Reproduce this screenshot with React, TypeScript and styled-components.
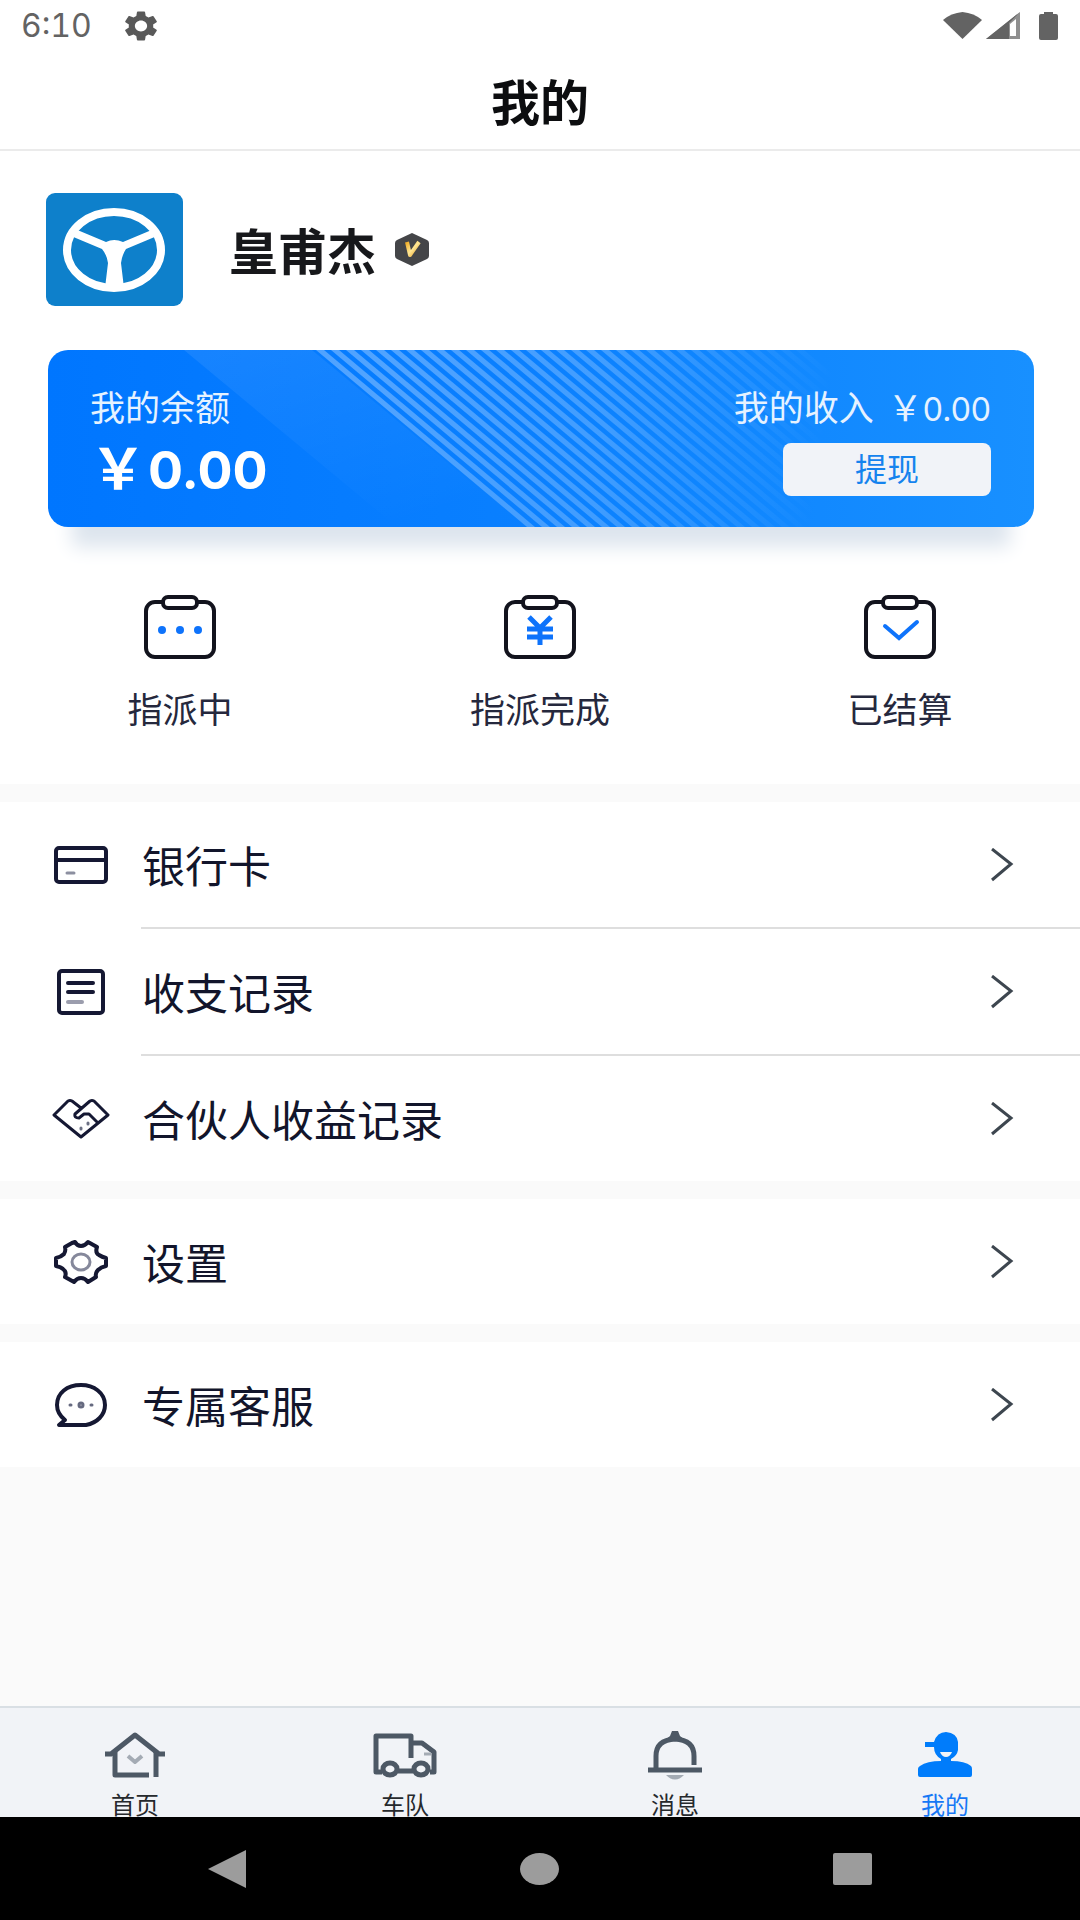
import React from "react";
import styled, { createGlobalStyle } from "styled-components";

const GlobalStyle = createGlobalStyle`
  *, *::before, *::after { box-sizing: border-box; }
  body {
    margin: 0;
    background: #fafafa;
    color: #12152b;
    font-family: Inter, "Noto Sans CJK SC", sans-serif;
  }
  button { font-family: inherit; border: 0; background: none; padding: 0; cursor: pointer; }
  a { color: inherit; text-decoration: none; }
  svg { display: block; flex: none; }
`;

const Page = styled.div`
  min-height: 100vh;
  display: flex;
  flex-direction: column;
`;

const StatusBar = styled.div`
  display: flex;
  align-items: center;
  justify-content: space-between;
  height: 52px;
  padding: 0 22px 0 21px;
  background: #fff;
  color: #636363;
`;

const StatusGroup = styled.div<{ $gap: number }>`
  display: flex;
  align-items: center;
  gap: ${(p) => p.$gap}px;
`;

const Clock = styled.time`
  font-size: 32px;
  line-height: 40px;
  font-variant-numeric: tabular-nums;
`;

const SignalGroup = styled.div`
  display: flex;
  gap: 4px;
`;

const Header = styled.header`
  display: flex;
  align-items: center;
  justify-content: center;
  height: 99px;
  padding-top: 6px;
  background: #fff;
  border-bottom: 2px solid #ebebeb;
`;

const Title = styled.h1`
  margin: 0;
  font-size: 49px;
  line-height: 60px;
  font-weight: 700;
  color: #0c0d0f;
`;

const Main = styled.main`
  flex: 1;
  display: flex;
  flex-direction: column;
  gap: 18px;
`;

const Overview = styled.section`
  background: #fff;
  padding: 42px 46px 53px;
`;

const Profile = styled.div`
  display: flex;
  align-items: center;
  height: 113px;
`;

const Avatar = styled.div`
  width: 137px;
  height: 113px;
  border-radius: 9px;
  overflow: hidden;
  background: #0e80cb;
`;

const UserName = styled.h2`
  margin: 0 18px 0 46px;
  padding-top: 6px;
  font-size: 49px;
  line-height: 60px;
  font-weight: 700;
  color: #17181b;
`;

const BalanceCard = styled.div`
  position: relative;
  display: flex;
  justify-content: space-between;
  margin: 44px 0 0 2px;
  padding: 38px 43px 30px 42px;
  height: 177px;
  border-radius: 20px;
  background: linear-gradient(90deg, #0076ff, #0a80ff 50%, #1890ff);
  box-shadow: 0 44px 18px -24px #dde5ee;
  color: #fff;
`;

const CardPattern = styled.svg`
  position: absolute;
  inset: 0;
  width: 100%;
  height: 100%;
  border-radius: 20px;
`;

const CardColumn = styled.div<{ $end?: boolean }>`
  position: relative;
  display: flex;
  flex-direction: column;
  align-items: ${(p) => (p.$end ? "flex-end" : "flex-start")};
`;

const CardLabel = styled.div`
  display: flex;
  align-items: baseline;
  font-size: 35px;
  line-height: 40px;
  color: #e6f2ff;
`;

const IncomeValue = styled.span`
  margin-left: 14px;
`;

const IncomeDigits = styled.span`
  font-size: 32px;
`;

const Balance = styled.div`
  display: flex;
  align-items: baseline;
  margin-top: 11px;
  font-size: 52px;
  line-height: 60px;
  font-weight: 700;
`;

const Currency = styled.span`
  padding-right: 2px;
  font-size: 56px;
`;

const WithdrawButton = styled.button`
  width: 208px;
  height: 53px;
  margin-top: 13px;
  border-radius: 8px;
  background: #f1f3f8;
  color: #1583ee;
  font-size: 32px;
  line-height: 50px;
`;

const Stats = styled.nav`
  display: grid;
  grid-template-columns: repeat(3, 1fr);
  margin: 68px -46px 0;
`;

const StatLink = styled.a`
  display: flex;
  flex-direction: column;
  align-items: center;
  gap: 30px;
  font-size: 35px;
  line-height: 42px;
  color: #25283d;
`;

const MenuGroup = styled.ul`
  list-style: none;
  margin: 0;
  padding: 0;
  background: #fff;
`;

const MenuItem = styled.li`
  &:not(:last-child)::after {
    content: "";
    display: block;
    height: 2px;
    margin-left: 141px;
    background: #dedede;
  }
`;

const MenuLink = styled.a`
  display: flex;
  align-items: center;
  height: 125px;
  padding: 0 66px 0 50px;
  font-size: 43px;
  line-height: 56px;
`;

const MenuText = styled.span`
  flex: 1;
  margin-left: 32px;
  padding-top: 4px;
`;

const TabBar = styled.nav`
  display: grid;
  grid-template-columns: repeat(4, 1fr);
  height: 111px;
  padding-top: 22px;
  border-top: 2px solid #d9dfe4;
  background: #f1f3f7;
`;

const TabLink = styled.a<{ $active?: boolean }>`
  display: flex;
  flex-direction: column;
  align-items: center;
  gap: 15px;
  font-size: 24px;
  line-height: 22px;
  color: ${(p) => (p.$active ? "#1677f5" : "#26292d")};
`;

const SystemBar = styled.div`
  display: flex;
  align-items: center;
  justify-content: space-between;
  height: 103px;
  padding: 0 208px;
  background: #000;
`;

const SystemButton = styled.button`
  display: block;
`;

const GearSolid = () => (
  <svg width="34" height="30" viewBox="2 2 20 20" preserveAspectRatio="none" fill="#595959" aria-hidden="true">
    <path d="M19.14 12.94c.04-.3.06-.61.06-.94 0-.32-.02-.64-.07-.94l2.03-1.58a.49.49 0 0 0 .12-.61l-1.92-3.32a.488.488 0 0 0-.59-.22l-2.39.96c-.5-.38-1.03-.7-1.62-.94l-.36-2.54a.484.484 0 0 0-.48-.41h-3.84c-.24 0-.43.17-.47.41l-.36 2.54c-.59.24-1.13.57-1.62.94l-2.39-.96c-.22-.08-.47 0-.59.22L2.74 8.87c-.12.21-.08.47.12.61l2.03 1.58c-.05.3-.09.63-.09.94s.02.64.07.94l-2.03 1.58a.49.49 0 0 0-.12.61l1.92 3.32c.12.22.37.29.59.22l2.39-.96c.5.38 1.03.7 1.62.94l.36 2.54c.05.24.24.41.48.41h3.84c.24 0 .44-.17.47-.41l.36-2.54c.59-.24 1.13-.56 1.62-.94l2.39.96c.22.08.47 0 .59-.22l1.92-3.32c.12-.22.07-.47-.12-.61l-2.01-1.58zM12 15.6c-1.98 0-3.6-1.62-3.6-3.6s1.62-3.6 3.6-3.6 3.6 1.62 3.6 3.6-1.62 3.6-3.6 3.6z" />
  </svg>
);

const WifiIcon = () => (
  <svg width="39" height="28" viewBox="0 0 39 28" fill="#636363" aria-hidden="true">
    <path d="M0 8Q8 1 19.500 0Q31 1 39 8L19.500 27Z" />
  </svg>
);

const CellIcon = () => (
  <svg width="35" height="28" viewBox="0 0 35 28" aria-hidden="true">
    <path d="M34 0V27H0Z" fill="#8f8f8f" />
    <path d="M34 0L0 27H23V11Z" fill="#636363" />
    <path d="M24 12L30 7V24H24Z" fill="#fff" />
  </svg>
);

const BatteryIcon = () => (
  <svg width="19" height="28" viewBox="0 0 19 28" fill="#636363" aria-hidden="true">
    <path d="M5 0H14V2H17Q19 2 19 4V26Q19 28 17 28H2Q0 28 0 26V4Q0 2 2 2H5Z" />
  </svg>
);

const SteeringWheel = () => (
  <svg width="137" height="113" viewBox="0 0 137 113" role="img" aria-label="头像">
    <ellipse cx="68" cy="57" rx="47" ry="38" fill="none" stroke="#fff" strokeWidth="8" />
    <path d="M29 36L60 49Q68 45 77 49L108 36L111 43L80 56Q76 62 75 70L78 95H59L62 70Q61 62 56 56L25 43Z" fill="#fff" />
  </svg>
);

const VipBadge = () => (
  <svg width="36" height="33" viewBox="0 0 36 33" role="img" aria-label="V">
    <defs>
      <linearGradient id="gold" x1="0" y1="0" x2="1" y2="1">
        <stop offset="0" stopColor="#f0ae28" />
        <stop offset="0.5" stopColor="#ffe795" />
        <stop offset="1" stopColor="#e39a1a" />
      </linearGradient>
    </defs>
    <path d="M18 0L33 7Q35 8 35 10V23Q35 25 33 26L18 33L3 26Q1 25 1 23V10Q1 8 3 7Z" fill="#444548" />
    <path d="M13 9L16 22L25 9" fill="none" stroke="url(#gold)" strokeWidth="4" strokeLinejoin="round" />
  </svg>
);

const stripes = Array.from({ length: 33 }, (_, i) => 268 + i * 15);

const Pattern = () => (
  <CardPattern viewBox="0 0 986 177" preserveAspectRatio="none" aria-hidden="true">
    <defs>
      <linearGradient id="facet" x1="0" y1="0" x2="0.6" y2="1">
        <stop offset="0" stopColor="#fff" stopOpacity="0.08" />
        <stop offset="1" stopColor="#fff" stopOpacity="0" />
      </linearGradient>
      <linearGradient id="fade" gradientUnits="userSpaceOnUse" x1="340" y1="0" x2="780" y2="60">
        <stop offset="0" stopColor="#fff" stopOpacity="0.3" />
        <stop offset="0.5" stopColor="#fff" stopOpacity="0.22" />
        <stop offset="1" stopColor="#fff" stopOpacity="0" />
      </linearGradient>
    </defs>
    <path d="M136 0H264L477 177H349Z" fill="url(#facet)" />
    {stripes.map((x) => (
      <path key={x} d={`M${x} 0h8l211 177h-8z`} fill="url(#fade)" />
    ))}
  </CardPattern>
);

const Clipboard = ({ children }: { children: React.ReactNode }) => (
  <svg width="72" height="64" viewBox="0 0 72 64" fill="none" aria-hidden="true">
    <rect x="2" y="7" width="68" height="55" rx="9" stroke="#12131d" strokeWidth="4" />
    <rect x="19" y="2" width="34" height="11" rx="5" fill="#fff" stroke="#12131d" strokeWidth="4" />
    {children}
  </svg>
);

const Dots = () => (
  <g fill="#0e73fb">
    <circle cx="18" cy="35" r="4" />
    <circle cx="36" cy="35" r="4" />
    <circle cx="54" cy="35" r="4" />
  </g>
);

const Yen = () => (
  <path d="M25 22L36 33L47 22M36 32V50M23 34H49M23 42H49" stroke="#0e73fb" strokeWidth="5" />
);

const Check = () => (
  <path d="M21 31L35 43L53 27" stroke="#0e73fb" strokeWidth="4" strokeLinecap="round" />
);

const MenuSvg = ({ children }: { children: React.ReactNode }) => (
  <svg width="60" height="50" viewBox="0 0 60 50" fill="none" stroke="#151833" strokeWidth="4" strokeLinejoin="round" strokeLinecap="round" aria-hidden="true">
    {children}
  </svg>
);

const BankCardIcon = () => (
  <MenuSvg>
    <rect x="6" y="8" width="50" height="34" rx="3" />
    <path d="M6 20H56" />
    <path d="M17 33H24" stroke="#8c8fa0" strokeWidth="3" />
  </MenuSvg>
);

const RecordIcon = () => (
  <MenuSvg>
    <rect x="9" y="4" width="44" height="42" rx="3" />
    <path d="M18 16H43M18 25H43" />
    <path d="M18 35H32" stroke="#9b9dad" />
  </MenuSvg>
);

const HandshakeIcon = () => (
  <MenuSvg>
    <path strokeWidth="3" d="M31 14L22 7Q20 6 18 7L4 21L31 43L58 21L44 7Q42 6 40 7L25 20Q24 24 29 24L34 20L39 20L47 28" />
    <path d="M38 29V30M31 34V35" strokeWidth="3" stroke="#6c7084" />
  </MenuSvg>
);

const SettingsIcon = () => (
  <MenuSvg>
    <path d="M22 6L25 5Q27 9 31 9Q35 9 38 5L47 10Q45 16 49 18Q52 20 56 21V29Q51 30 48 33Q45 36 46 40L38 45Q35 41 31 41Q27 41 24 45L15 40Q17 35 13 32Q11 30 6 29V21Q11 20 14 17Q16 14 15 10Z" />
    <ellipse cx="31" cy="25" rx="9" ry="8" strokeWidth="3" stroke="#85889b" />
  </MenuSvg>
);

const ChatIcon = () => (
  <MenuSvg>
    <path d="M9 45H36C47 43 55 35 55 25C55 13 44 5 31 5C17 5 7 13 7 25C7 31 10 36 15 40Z" />
    <path d="M20 25H21M41 25H42" strokeWidth="3" stroke="#666a80" />
    <circle cx="31" cy="25" r="2" stroke="#666a80" strokeWidth="3" />
  </MenuSvg>
);

const Chevron = () => (
  <svg width="24" height="34" viewBox="0 0 24 34" fill="none" stroke="#3d464f" strokeWidth="3" aria-hidden="true">
    <path d="M2 1L21 16L2 32" />
  </svg>
);

const TabSvg = ({ children }: { children: React.ReactNode }) => (
  <svg width="64" height="50" viewBox="0 0 64 50" fill="none" stroke="#4d5865" strokeWidth="5" strokeLinejoin="round" aria-hidden="true">
    {children}
  </svg>
);

const HomeIcon = () => (
  <TabSvg>
    <path d="M2 24H8L32 5L56 24H62" />
    <path d="M12 22V45H46M53 22V47" />
    <path d="M25 26L32 32L39 26" stroke="#a4abb4" strokeWidth="4" />
  </TabSvg>
);

const TruckIcon = () => (
  <TabSvg>
    <path d="M9 42H3V6H38V28M38 13H49L61 22V42H57M25 41H40" />
    <ellipse cx="17" cy="39" rx="7" ry="6" />
    <ellipse cx="48" cy="39" rx="7" ry="6" />
    <path d="M51 24H58" stroke="#a4abb4" strokeWidth="3" />
  </TabSvg>
);

const BellIcon = () => (
  <TabSvg>
    <path d="M13 38V26Q13 10 32 9Q51 10 51 26V35" />
    <path d="M5 40H59" />
    <path d="M29 1H35L37 6L43 11H21L27 6Z" fill="#4d5865" stroke="none" />
    <path d="M23 45H41Q32 54 23 45Z" fill="#a4abb4" stroke="none" />
  </TabSvg>
);

const DriverIcon = () => (
  <svg width="64" height="50" viewBox="0 0 64 50" aria-hidden="true">
    <path d="M12 12H21Q24 2 33 2Q44 3 45 12V20Q44 26 38 29V31Q52 31 58 36Q59 37 59 39V45Q59 47 57 47H7Q5 47 5 45V39Q5 37 7 36Q14 31 28 31V29Q21 25 21 17H12Z" fill="#007cfb" />
    <path d="M27 22H39Q37 27 33 27Q29 27 27 22Z" fill="#f1f3f7" />
  </svg>
);

const stats = [
  { label: "指派中", mark: <Dots /> },
  { label: "指派完成", mark: <Yen /> },
  { label: "已结算", mark: <Check /> },
];

const menu = [
  [
    { label: "银行卡", icon: <BankCardIcon /> },
    { label: "收支记录", icon: <RecordIcon /> },
    { label: "合伙人收益记录", icon: <HandshakeIcon /> },
  ],
  [{ label: "设置", icon: <SettingsIcon /> }],
  [{ label: "专属客服", icon: <ChatIcon /> }],
];

const tabs = [
  { label: "首页", icon: <HomeIcon /> },
  { label: "车队", icon: <TruckIcon /> },
  { label: "消息", icon: <BellIcon /> },
  { label: "我的", icon: <DriverIcon />, active: true },
];

export default function App() {
  return (
    <Page lang="zh-CN">
      <GlobalStyle />
      <StatusBar>
        <StatusGroup $gap={32}>
          <Clock>6:10</Clock>
          <GearSolid />
        </StatusGroup>
        <StatusGroup $gap={18}>
          <SignalGroup>
            <WifiIcon />
            <CellIcon />
          </SignalGroup>
          <BatteryIcon />
        </StatusGroup>
      </StatusBar>
      <Header>
        <Title>我的</Title>
      </Header>
      <Main>
        <Overview>
          <Profile>
            <Avatar>
              <SteeringWheel />
            </Avatar>
            <UserName>皇甫杰</UserName>
            <VipBadge />
          </Profile>
          <BalanceCard>
            <Pattern />
            <CardColumn>
              <CardLabel>我的余额</CardLabel>
              <Balance>
                <Currency>￥</Currency>0.00
              </Balance>
            </CardColumn>
            <CardColumn $end>
              <CardLabel>
                我的收入
                <IncomeValue>
                  ￥<IncomeDigits>0.00</IncomeDigits>
                </IncomeValue>
              </CardLabel>
              <WithdrawButton type="button">提现</WithdrawButton>
            </CardColumn>
          </BalanceCard>
          <Stats>
            {stats.map((s) => (
              <StatLink href="#" key={s.label}>
                <Clipboard>{s.mark}</Clipboard>
                {s.label}
              </StatLink>
            ))}
          </Stats>
        </Overview>
        {menu.map((group) => (
          <MenuGroup key={group[0].label}>
            {group.map((item) => (
              <MenuItem key={item.label}>
                <MenuLink href="#">
                  {item.icon}
                  <MenuText>{item.label}</MenuText>
                  <Chevron />
                </MenuLink>
              </MenuItem>
            ))}
          </MenuGroup>
        ))}
      </Main>
      <TabBar>
        {tabs.map((t) => (
          <TabLink href="#" key={t.label} $active={t.active}>
            {t.icon}
            {t.label}
          </TabLink>
        ))}
      </TabBar>
      <SystemBar>
        <SystemButton type="button" aria-label="返回">
          <svg width="38" height="38" viewBox="0 0 38 38" fill="#9c9c9c">
            <path d="M0 19L38 0V38Z" />
          </svg>
        </SystemButton>
        <SystemButton type="button" aria-label="主屏幕">
          <svg width="39" height="32" viewBox="0 0 39 32" fill="#9c9c9c">
            <ellipse cx="19.500" cy="16" rx="19.500" ry="16" />
          </svg>
        </SystemButton>
        <SystemButton type="button" aria-label="最近任务">
          <svg width="39" height="32" viewBox="0 0 39 32" fill="#9c9c9c">
            <rect width="39" height="32" rx="2" />
          </svg>
        </SystemButton>
      </SystemBar>
    </Page>
  );
}
